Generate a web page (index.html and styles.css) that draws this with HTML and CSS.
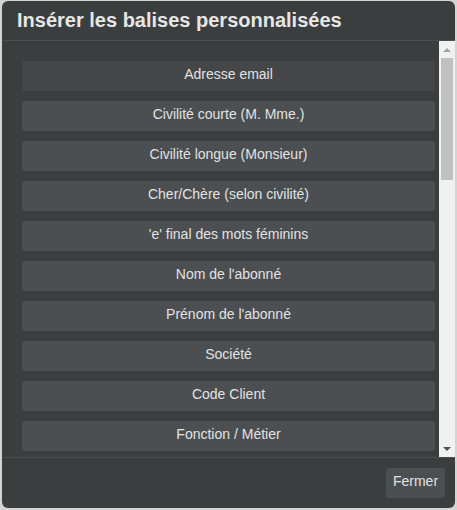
FILE: index.html
```html
<!DOCTYPE html>
<html lang="fr">
<head>
<meta charset="utf-8">
<title>Insérer les balises personnalisées</title>
<link rel="stylesheet" href="styles.css">
</head>
<body>
<div class="dialog">
  <div class="header"><h1 class="title">Insérer les balises personnalisées</h1></div>
  <div class="body">
    <div class="list">
      <button class="tag tag-hover">Adresse email</button>
      <button class="tag">Civilité courte (M. Mme.)</button>
      <button class="tag">Civilité longue (Monsieur)</button>
      <button class="tag">Cher/Chère (selon civilité)</button>
      <button class="tag">'e' final des mots féminins</button>
      <button class="tag">Nom de l'abonné</button>
      <button class="tag">Prénom de l'abonné</button>
      <button class="tag">Société</button>
      <button class="tag">Code Client</button>
      <button class="tag">Fonction / Métier</button>
    </div>
    <div class="scrollbar">
      <div class="arrow arrow-up"><svg width="8" height="4" viewBox="0 0 8 4"><polygon points="0,4 8,4 4,0" fill="#a3a3a3"/></svg></div>
      <div class="track"><div class="thumb"></div></div>
      <div class="arrow arrow-down"><svg width="8" height="4" viewBox="0 0 8 4"><polygon points="0,0 8,0 4,4" fill="#505050"/></svg></div>
    </div>
  </div>
  <div class="footer"><button class="close">Fermer</button></div>
</div>
</body>
</html>
```

FILE: styles.css
```css
html, body {
  margin: 0;
  padding: 0;
}
body {
  background: #d4d4d4;
  width: 457px;
  height: 510px;
  overflow: hidden;
  font-family: "Liberation Sans", Arial, sans-serif;
}
.dialog {
  margin: 1px 2px 0 2px;
  width: 453px;
  height: 507px;
  background: #3a3e3f;
  border-radius: 6px;
  display: flex;
  flex-direction: column;
  overflow: hidden;
}
.header {
  height: 39px;
  flex: none;
  border-bottom: 1px solid #4b4f50;
  display: flex;
  align-items: center;
  padding-left: 15px;
}
.title {
  margin: 0;
  font-size: 20px;
  font-weight: bold;
  color: #e6e6e6;
}
.body {
  flex: none;
  height: 416px;
  display: flex;
}
.list {
  flex: 1;
  overflow: hidden;
  padding: 20px 2px 0 20px;
  display: flex;
  flex-direction: column;
  gap: 10px;
}
.tag {
  flex: none;
  height: 30px;
  border: none;
  border-radius: 3px;
  background: #4b4f52;
  color: #e2e2e2;
  font-family: "Liberation Sans", Arial, sans-serif;
  font-size: 14px;
  padding: 0 0 5px 0;
  width: 413px;
}
.tag-hover {
  background: #444648;
}
.scrollbar {
  flex: none;
  width: 16px;
  background: #f1f1f1;
  display: flex;
  flex-direction: column;
}
.arrow {
  height: 17px;
  display: flex;
  align-items: center;
  justify-content: center;
  flex: none;
}
.track {
  flex: 1;
  padding: 0 2px;
}
.thumb {
  height: 122px;
  background: #c1c1c1;
}
.footer {
  flex: 1;
  border-top: 1px solid #4b4f50;
  display: flex;
  justify-content: flex-end;
  align-items: flex-start;
  padding: 10px 10px 0 0;
}
.close {
  height: 30px;
  width: 59px;
  border: none;
  border-radius: 3px;
  background: #4b4f52;
  color: #e2e2e2;
  font-family: "Liberation Sans", Arial, sans-serif;
  font-size: 14px;
  padding: 0 0 5px 0;
}
```
